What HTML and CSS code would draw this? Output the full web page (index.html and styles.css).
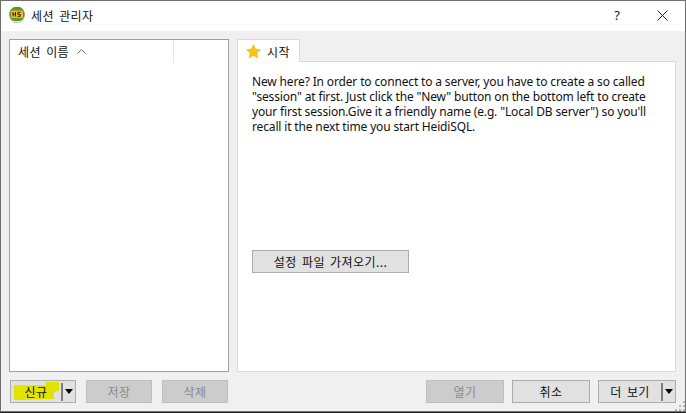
FILE: index.html
```html
<!DOCTYPE html>
<html lang="ko">
<head>
<meta charset="utf-8">
<title>세션 관리자</title>
<link rel="stylesheet" href="styles.css">
</head>
<body>
<div class="window">
  <header class="titlebar">
    <svg class="app-icon" width="16" height="16" viewBox="0 0 16 16">
      <circle cx="8" cy="8" r="8" fill="#b4b4ae"/>
      <circle cx="8" cy="7" r="7.500" fill="#5c9a1c"/>
      <path d="M1 10.500a7.500 7.500 0 0 0 14 0l-2 3.500h-10z" fill="#ecece8"/>
      <rect x="2" y="3.500" width="12" height="7.500" rx="1.500" fill="#f2b92c"/>
      <path d="M4 5v4.500M6.500 5v4.500M4 7.200h2.500M11.500 5.300H8.800v2h2.500v2H8.500" fill="none" stroke="#3f2806" stroke-width="1"/>
    </svg>
    <span class="title">세션 관리자</span>
    <span class="help">?</span>
    <svg class="close" width="11" height="11" viewBox="0 0 11 11"><path d="M.5.500l10 10M10.500.500l-10 10" stroke="#222" stroke-width="1" fill="none"/></svg>
  </header>
  <main class="content">
    <div class="panes">
      <section class="list">
        <div class="list-head">
          <div class="col-name"><span>세션 이름</span>
            <svg width="9" height="5" viewBox="0 0 9 5"><path d="M.5 4.500l4-4 4 4" fill="none" stroke="#666"/></svg>
          </div>
        </div>
      </section>
      <section class="tabs">
        <div class="tab">
          <svg width="15" height="15" viewBox="0 0 15 15"><path d="M7.500.500l2.100 4.600 5 .6-3.700 3.400 1 5-4.400-2.500-4.400 2.500 1-5L.400 5.700l5-.6z" fill="#fbc216" stroke="#f3b00c" stroke-width=".5"/></svg>
          <span>시작</span>
        </div>
        <div class="tab-pane">
          <p class="intro">New here? In order to connect to a server, you have to create a so called<br>"session" at first. Just click the "New" button on the bottom left to create<br>your first session.Give it a friendly name (e.g. "Local DB server") so you'll<br>recall it the next time you start HeidiSQL.</p>
          <button class="btn btn-import">설정 파일 가져오기...</button>
        </div>
      </section>
    </div>
    <footer class="actions">
      <div class="group-left">
        <div class="btn split new">
          <svg class="marker" width="46" height="18" viewBox="0 0 46 18"><path d="M32 0h13v9l-5 1v7l-40 1V3h32z" fill="#e3e300"/></svg>
          <span class="split-label">신규</span><i class="split-sep"></i><i class="arrow"></i>
        </div>
        <button class="btn disabled">저장</button>
        <button class="btn disabled">삭제</button>
      </div>
      <div class="group-right">
        <button class="btn wide disabled">열기</button>
        <button class="btn wide">취소</button>
        <div class="btn split more"><span class="split-label">더 보기</span><i class="split-sep"></i><i class="arrow"></i></div>
      </div>
    </footer>
  </main>
  <svg class="grip" width="10" height="10" viewBox="0 0 10 10" fill="#b8b8b8"><rect x="8" y="0" width="2" height="2"/><rect x="4" y="4" width="2" height="2"/><rect x="8" y="4" width="2" height="2"/><rect x="0" y="8" width="2" height="2"/><rect x="4" y="8" width="2" height="2"/><rect x="8" y="8" width="2" height="2"/></svg>
</div>
</body>
</html>
```
FILE: styles.css
```css
* { box-sizing: border-box; }
html, body { margin: 0; padding: 0; }
body {
  width: 686px;
  height: 413px;
  overflow: hidden;
  font-family: "Noto Sans", "Noto Sans CJK KR", sans-serif;
  font-size: 12px;
  color: #111;
  background: #222;
}
.window {
  position: relative;
  width: 686px;
  height: 412px;
  border: 1px solid #6f6f6f;
  display: flex;
  flex-direction: column;
  background: #f0f0f0;
}
.titlebar {
  height: 30px;
  background: #fff;
  display: flex;
  align-items: center;
  padding: 0 17px 2px 8px;
  flex: none;
}
.app-icon { margin-right: 6px; }
.title, .col-name, .tab, .btn {
  font-family: "Noto Sans CJK KR", sans-serif;
  font-size: 12px;
  letter-spacing: 0.4px;
  word-spacing: 1.5px;
}
.title { flex: 1; }
.help { font-size: 13px; margin-right: 37px; color: #222; }
.content {
  flex: 1;
  display: flex;
  flex-direction: column;
  padding: 8px 9px 7px 8px;
  min-height: 0;
}
.panes { display: flex; flex: none; height: 333px; gap: 8px; }
.list {
  width: 220px;
  background: #fff;
  border: 1px solid #a0a0a0;
}
.list-head { height: 23px; display: flex; }
.col-name {
  width: 164px;
  border-right: 1px solid #e5e5e5;
  padding-left: 8px;
  display: flex;
  align-items: center;
  gap: 8px;
}
.tabs { flex: 1; display: flex; flex-direction: column; align-items: flex-start; }
.tab {
  width: 63px;
  height: 23px;
  margin-bottom: -1px;
  background: #fff;
  border: 1px solid #d9d9d9;
  border-bottom: 0;
  display: flex;
  align-items: center;
  gap: 6px;
  padding-left: 8px;
  position: relative;
  z-index: 1;
}
.tab-pane {
  width: 100%;
  flex: 1;
  background: #fff;
  border: 1px solid #d9d9d9;
  padding: 12px 14px 98px;
  display: flex;
  flex-direction: column;
  align-items: flex-start;
}
.intro { margin: 0; line-height: 15px; letter-spacing: -0.15px; flex: 1; white-space: nowrap; }
.btn {
  height: 23px;
  border: 1px solid #adadad;
  background: #e1e1e1;
  color: #111;
  padding: 0;
  display: flex;
  align-items: center;
  justify-content: center;
}
.btn-import { width: 157px; }
.disabled { background: #cccccc; color: #8a8a8a; width: 66px; border-color: #bfbfbf; }
.actions {
  display: flex;
  justify-content: space-between;
  padding: 8px 0 0 1px;
}
.group-left, .group-right { display: flex; }
.group-left { gap: 10px; }
.group-right { gap: 8px; }
.wide { width: 78px; }
.split { position: relative; justify-content: flex-start; }
.new { width: 66px; }
.more { width: 78px; }
.split-label { flex: 1; text-align: center; position: relative; }
.split-sep { width: 2px; height: 18px; background: #7d7d7d; }
.arrow {
  width: 0;
  height: 0;
  margin: 0 2px 0 2px;
  border-left: 4.5px solid transparent;
  border-right: 4.5px solid transparent;
  border-top: 5px solid #000;
}
.marker { position: absolute; left: 3px; top: 1px; }
.grip { position: absolute; right: 0; bottom: 0; }
```
